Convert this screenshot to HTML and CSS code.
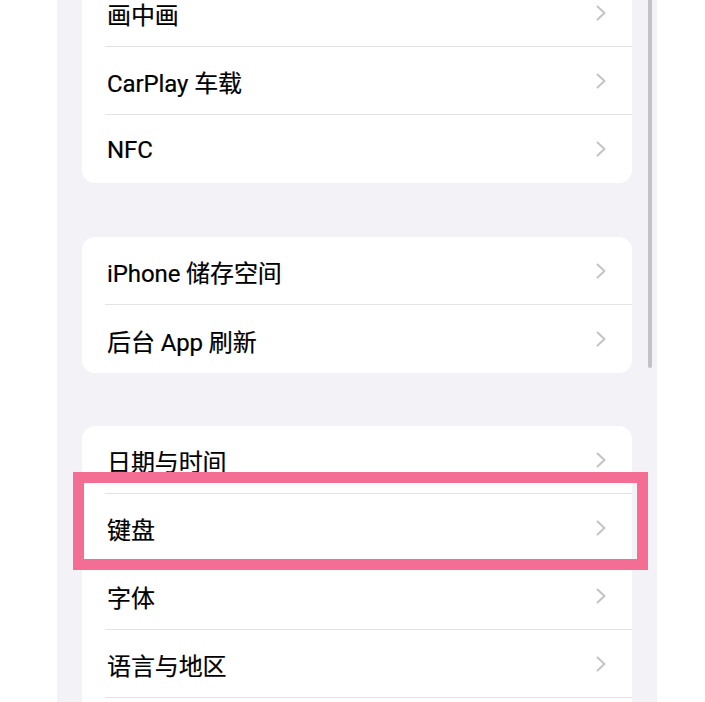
FILE: index.html
```html
<!DOCTYPE html>
<html lang="zh-CN">
<head>
<meta charset="utf-8">
<link rel="stylesheet" href="styles.css">
</head>
<body>
<div class="screen">
  <div class="scrollbar"></div>
  <div class="group first">
    <div class="row"><span class="label">画中画</span><svg class="chev" viewBox="0 0 10 16"><path d="M1.5 1.5 L8.5 8 L1.5 14.5"/></svg></div>
    <div class="row"><span class="label">CarPlay 车载</span><svg class="chev" viewBox="0 0 10 16"><path d="M1.5 1.5 L8.5 8 L1.5 14.5"/></svg></div>
    <div class="row last"><span class="label">NFC</span><svg class="chev" viewBox="0 0 10 16"><path d="M1.5 1.5 L8.5 8 L1.5 14.5"/></svg></div>
  </div>
  <div class="group">
    <div class="row"><span class="label">iPhone 储存空间</span><svg class="chev" viewBox="0 0 10 16"><path d="M1.5 1.5 L8.5 8 L1.5 14.5"/></svg></div>
    <div class="row last"><span class="label">后台 App 刷新</span><svg class="chev" viewBox="0 0 10 16"><path d="M1.5 1.5 L8.5 8 L1.5 14.5"/></svg></div>
  </div>
  <div class="group third">
    <div class="row"><span class="label">日期与时间</span><svg class="chev" viewBox="0 0 10 16"><path d="M1.5 1.5 L8.5 8 L1.5 14.5"/></svg></div>
    <div class="row"><span class="label">键盘</span><svg class="chev" viewBox="0 0 10 16"><path d="M1.5 1.5 L8.5 8 L1.5 14.5"/></svg></div>
    <div class="row"><span class="label">字体</span><svg class="chev" viewBox="0 0 10 16"><path d="M1.5 1.5 L8.5 8 L1.5 14.5"/></svg></div>
    <div class="row"><span class="label">语言与地区</span><svg class="chev" viewBox="0 0 10 16"><path d="M1.5 1.5 L8.5 8 L1.5 14.5"/></svg></div>
    <div class="row last"></div>
  </div>
  <div class="highlight"></div>
</div>
</body>
</html>
```

FILE: styles.css
```css
html, body {
  margin: 0;
  padding: 0;
  background: #ffffff;
}
body {
  width: 705px;
  height: 702px;
  overflow: hidden;
  font-family: "Roboto", "Noto Sans CJK SC", sans-serif;
}
.screen {
  position: relative;
  margin-left: 57px;
  width: 600px;
  height: 702px;
  background: #f2f2f7;
  padding: 0 25px;
  box-sizing: border-box;
  overflow: hidden;
}
.scrollbar {
  position: absolute;
  left: 591px;
  top: 0;
  width: 4px;
  height: 368px;
  background: #c3c3c7;
  border-radius: 0 0 2px 2px;
}
.group {
  background: #ffffff;
  border-radius: 13px;
  margin-bottom: 54px;
  overflow: hidden;
}
.group.first {
  margin-top: -21px;
}
.group.third {
  margin-top: -1px;
}
.row {
  height: 68px;
  margin-left: 23px;
  padding: 0 26px 0 2px;
  display: flex;
  align-items: center;
  justify-content: space-between;
  border-bottom: 1px solid #e3e3e6;
  box-sizing: border-box;
}
.row.last {
  border-bottom: none;
}
.label {
  font-size: 24px;
  color: #000000;
  letter-spacing: -0.1px;
  padding-top: 2px;
  -webkit-text-stroke: 0.2px #000000;
}
.chev {
  width: 10px;
  height: 16px;
  fill: none;
  stroke: #c4c4c7;
  stroke-width: 2;
  stroke-linecap: round;
  stroke-linejoin: round;
}
.highlight {
  position: absolute;
  left: 16px;
  top: 472px;
  width: 575px;
  height: 98px;
  border: 11px solid #f36e92;
  box-sizing: border-box;
}
```
